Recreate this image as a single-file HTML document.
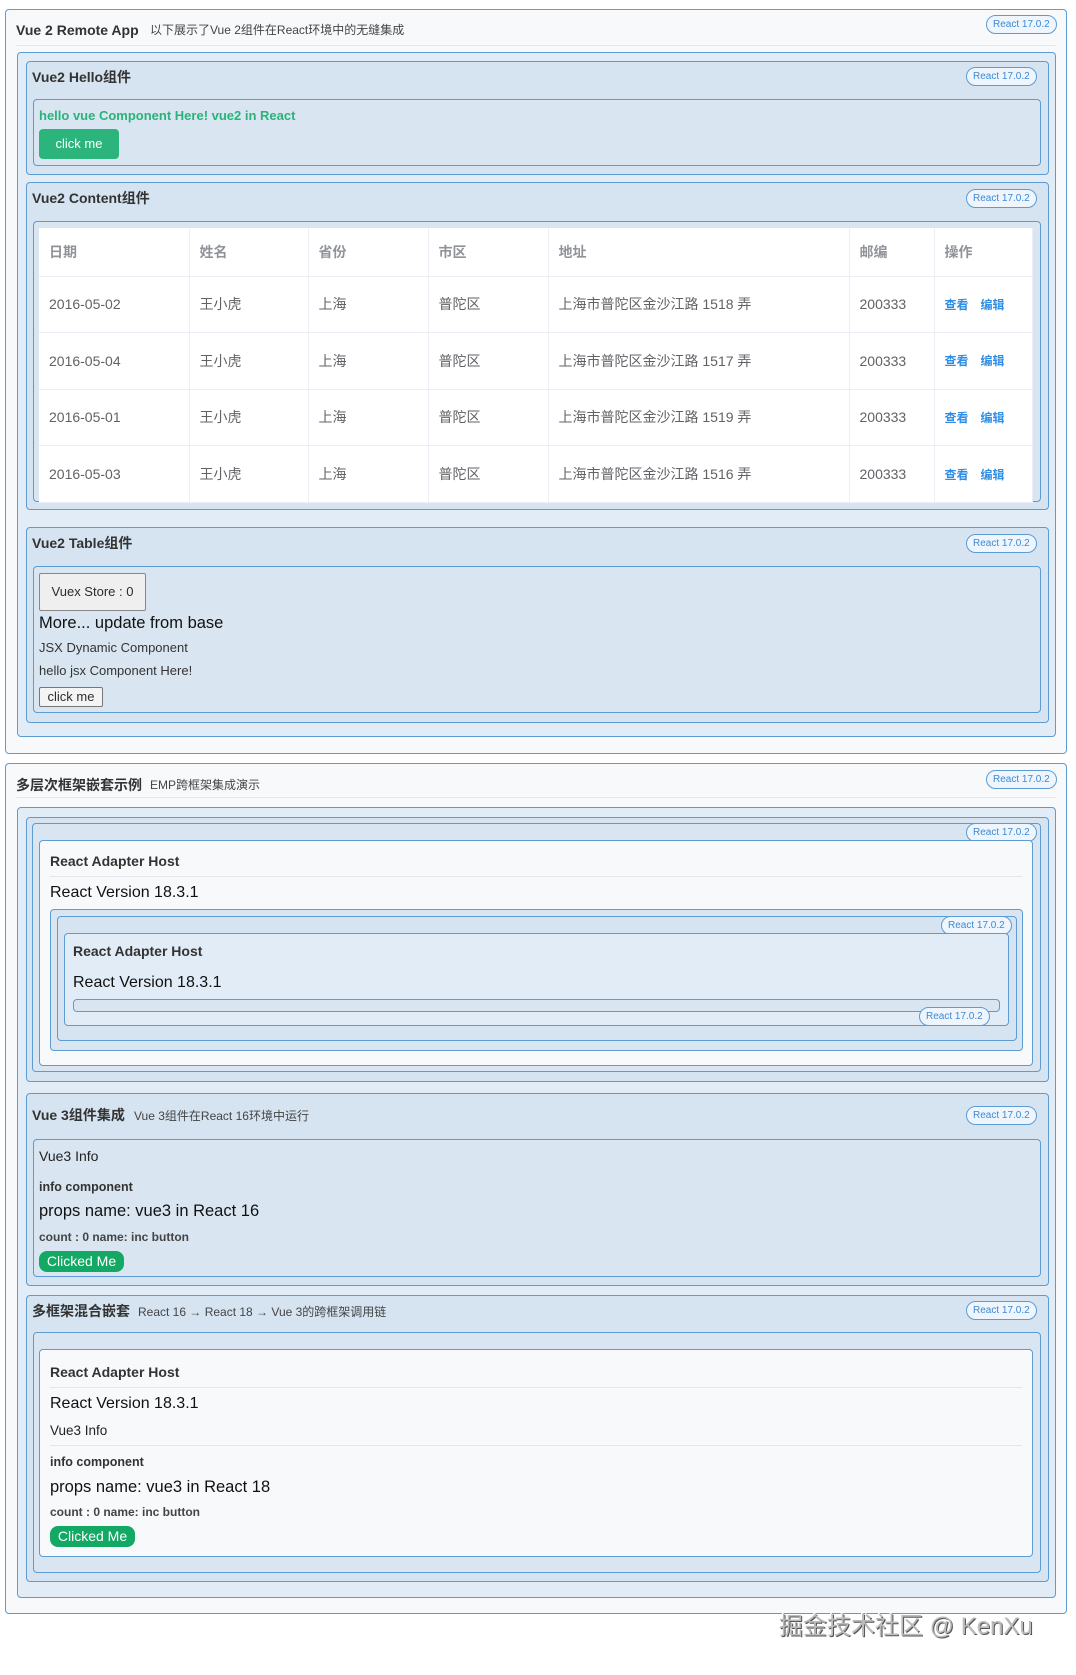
<!DOCTYPE html>
<html><head><meta charset="utf-8"><style>
*{box-sizing:border-box;margin:0;padding:0}
body{width:1076px;height:1675px;background:#fff;position:relative;font-family:"Liberation Sans","Noto Sans CJK SC",sans-serif;color:#2c2c2c;overflow:hidden}
.b{position:absolute;border:1px solid #5d9bd3;border-radius:4px}
.t{position:absolute;white-space:nowrap;line-height:1}
.bd{position:absolute;border:1px solid #5d9bd3;border-radius:10px;background:#eef5fc;color:#3d8ad6;font-size:10px;line-height:17px;height:19px;padding:0 6px;white-space:nowrap}
.sep{position:absolute;height:1px;background:#e2e8ee}
.h{font-size:14px;font-weight:bold;color:#333}
.s{font-size:12px;color:#444}
td{border-bottom:1px solid #ebeef5;border-right:1px solid #ebeef5;font-size:14px;color:#606266;padding-left:10px;height:56.6px}
th{border-bottom:1px solid #ebeef5;border-right:1px solid #ebeef5;font-size:14px;color:#909399;text-align:left;padding-left:10px;height:48px;font-weight:bold}
a{color:#2e8ee6;font-weight:bold;font-size:12px;margin-right:12px}
.btn{position:absolute;background:#13a863;color:#fff;font-size:14px;border-radius:8px;text-align:center}
</style></head><body>

<div class="b" style="left:5px;top:9px;width:1062px;height:745px;background:#f7f9fb"></div>
<div class="t h" style="left:16px;top:23px;font-size:14px">Vue 2 Remote App</div>
<div class="t s" style="left:150px;top:24px">以下展示了Vue 2组件在React环境中的无缝集成</div>
<div class="bd" style="left:986px;top:15px">React 17.0.2</div>
<div class="sep" style="left:16px;top:45px;width:1040px"></div>
<div class="b" style="left:17px;top:52px;width:1039px;height:685px;background:#e2ecf6"></div>

<div class="b" style="left:26px;top:61px;width:1023px;height:114px;background:#d6e4f1"></div>
<div class="t h" style="left:32px;top:70px">Vue2 Hello组件</div>
<div class="bd" style="left:966px;top:67px">React 17.0.2</div>
<div class="b" style="left:33px;top:99px;width:1008px;height:67px;background:#d9e6f2"></div>
<div class="t" style="left:39px;top:109px;font-size:13px;font-weight:bold;color:#29b37a">hello vue Component Here! vue2 in React</div>
<div class="btn" style="left:39px;top:129px;width:80px;height:30px;line-height:30px;background:#2bb57c;border-radius:4px;font-size:13px">click me</div>

<div class="b" style="left:26px;top:182px;width:1023px;height:328px;background:#d6e4f1"></div>
<div class="t h" style="left:32px;top:191px">Vue2 Content组件</div>
<div class="bd" style="left:966px;top:189px">React 17.0.2</div>
<div class="b" style="left:33px;top:221px;width:1008px;height:281px;background:#d9e6f2"></div>
<table style="position:absolute;left:39px;top:228px;width:994px;border-collapse:collapse;background:#fff">
<colgroup><col style="width:150px"><col style="width:119px"><col style="width:120px"><col style="width:120px"><col style="width:301px"><col style="width:85px"><col></colgroup>
<tr><th>日期</th><th>姓名</th><th>省份</th><th>市区</th><th>地址</th><th>邮编</th><th>操作</th></tr>
<tr><td>2016-05-02</td><td>王小虎</td><td>上海</td><td>普陀区</td><td>上海市普陀区金沙江路 1518 弄</td><td>200333</td><td><a>查看</a><a>编辑</a></td></tr>
<tr><td>2016-05-04</td><td>王小虎</td><td>上海</td><td>普陀区</td><td>上海市普陀区金沙江路 1517 弄</td><td>200333</td><td><a>查看</a><a>编辑</a></td></tr>
<tr><td>2016-05-01</td><td>王小虎</td><td>上海</td><td>普陀区</td><td>上海市普陀区金沙江路 1519 弄</td><td>200333</td><td><a>查看</a><a>编辑</a></td></tr>
<tr><td>2016-05-03</td><td>王小虎</td><td>上海</td><td>普陀区</td><td>上海市普陀区金沙江路 1516 弄</td><td>200333</td><td><a>查看</a><a>编辑</a></td></tr>
</table>

<div class="b" style="left:26px;top:527px;width:1023px;height:196px;background:#d6e4f1"></div>
<div class="t h" style="left:32px;top:536px">Vue2 Table组件</div>
<div class="bd" style="left:966px;top:534px">React 17.0.2</div>
<div class="b" style="left:33px;top:566px;width:1008px;height:147px;background:#d9e6f2"></div>
<div style="position:absolute;left:39px;top:573px;width:107px;height:38px;background:#efefef;border:1px solid #888;border-radius:2px;font-size:13px;line-height:36px;text-align:center">Vuex Store : 0</div>
<div class="t" style="left:39px;top:615px;font-size:16.5px;color:#111">More... update from base</div>
<div class="t" style="left:39px;top:641px;font-size:13px;color:#333">JSX Dynamic Component</div>
<div class="t" style="left:39px;top:664px;font-size:13px;color:#333">hello jsx Component Here!</div>
<div style="position:absolute;left:39px;top:687px;width:64px;height:20px;background:#f4f4f4;border:1px solid #777;border-radius:2px;font-size:13px;line-height:18px;text-align:center">click me</div>

<div class="b" style="left:5px;top:763px;width:1062px;height:851px;background:#f7f9fb"></div>
<div class="t h" style="left:16px;top:778px">多层次框架嵌套示例</div>
<div class="t s" style="left:150px;top:779px">EMP跨框架集成演示</div>
<div class="bd" style="left:986px;top:770px">React 17.0.2</div>
<div class="sep" style="left:16px;top:797px;width:1040px"></div>
<div class="b" style="left:17px;top:807px;width:1039px;height:791px;background:#e2ecf6"></div>

<div class="b" style="left:26px;top:817px;width:1023px;height:265px;background:#d6e4f1"></div>
<div class="b" style="left:32px;top:823px;width:1009px;height:249px;background:#d9e6f2"></div>
<div class="bd" style="left:966px;top:823px">React 17.0.2</div>
<div class="b" style="left:39px;top:840px;width:994px;height:226px;background:#f7f9fb"></div>
<div class="t" style="left:50px;top:854px;font-size:14px;font-weight:bold;color:#333">React Adapter Host</div>
<div class="sep" style="left:50px;top:876px;width:972px"></div>
<div class="t" style="left:50px;top:885px;font-size:16px;color:#111">React Version 18.3.1</div>
<div class="b" style="left:50px;top:909px;width:973px;height:142px;background:#d9e6f2"></div>
<div class="b" style="left:57px;top:916px;width:960px;height:125px;background:#d6e4f1"></div>
<div class="bd" style="left:941px;top:916px">React 17.0.2</div>
<div class="b" style="left:64px;top:933px;width:945px;height:93px;background:#e2ecf6"></div>
<div class="t" style="left:73px;top:944px;font-size:14px;font-weight:bold;color:#333">React Adapter Host</div>
<div class="t" style="left:73px;top:975px;font-size:16px;color:#111">React Version 18.3.1</div>
<div class="b" style="left:73px;top:999px;width:927px;height:13px;background:#d9e6f2"></div>
<div class="bd" style="left:919px;top:1007px">React 17.0.2</div>

<div class="b" style="left:26px;top:1093px;width:1023px;height:193px;background:#d6e4f1"></div>
<div class="t h" style="left:32px;top:1108px">Vue 3组件集成</div>
<div class="t s" style="left:134px;top:1110px">Vue 3组件在React 16环境中运行</div>
<div class="bd" style="left:966px;top:1106px">React 17.0.2</div>
<div class="b" style="left:33px;top:1139px;width:1008px;height:138px;background:#d9e6f2"></div>
<div class="t" style="left:39px;top:1149px;font-size:14px;color:#222">Vue3 Info</div>
<div class="t" style="left:39px;top:1181px;font-size:12.5px;font-weight:bold;color:#333">info component</div>
<div class="t" style="left:39px;top:1203px;font-size:16.5px;color:#111">props name: vue3 in React 16</div>
<div class="t" style="left:39px;top:1231px;font-size:12px;font-weight:bold;color:#444">count : 0 name: inc button</div>
<div class="btn" style="left:39px;top:1251px;width:85px;height:21px;line-height:21px">Clicked Me</div>

<div class="b" style="left:26px;top:1295px;width:1023px;height:287px;background:#d6e4f1"></div>
<div class="t h" style="left:32px;top:1304px">多框架混合嵌套</div>
<div class="t s" style="left:138px;top:1306px">React 16 → React 18 → Vue 3的跨框架调用链</div>
<div class="bd" style="left:966px;top:1301px">React 17.0.2</div>
<div class="b" style="left:33px;top:1332px;width:1008px;height:241px;background:#d9e6f2"></div>
<div class="b" style="left:39px;top:1349px;width:994px;height:208px;background:#f7f9fb"></div>
<div class="t" style="left:50px;top:1365px;font-size:14px;font-weight:bold;color:#333">React Adapter Host</div>
<div class="sep" style="left:50px;top:1387px;width:972px"></div>
<div class="t" style="left:50px;top:1396px;font-size:16px;color:#111">React Version 18.3.1</div>
<div class="t" style="left:50px;top:1424px;font-size:13.5px;color:#222">Vue3 Info</div>
<div class="sep" style="left:50px;top:1445px;width:972px"></div>
<div class="t" style="left:50px;top:1456px;font-size:12.5px;font-weight:bold;color:#333">info component</div>
<div class="t" style="left:50px;top:1479px;font-size:16.5px;color:#111">props name: vue3 in React 18</div>
<div class="t" style="left:50px;top:1506px;font-size:12px;font-weight:bold;color:#444">count : 0 name: inc button</div>
<div class="btn" style="left:50px;top:1526px;width:85px;height:21px;line-height:21px">Clicked Me</div>

<div class="t" style="left:779px;top:1615px;font-size:24px;color:#bbb;text-shadow:1px 1px 0 #555,-1px -1px 0 #fff">掘金技术社区 @ KenXu</div>
</body></html>
